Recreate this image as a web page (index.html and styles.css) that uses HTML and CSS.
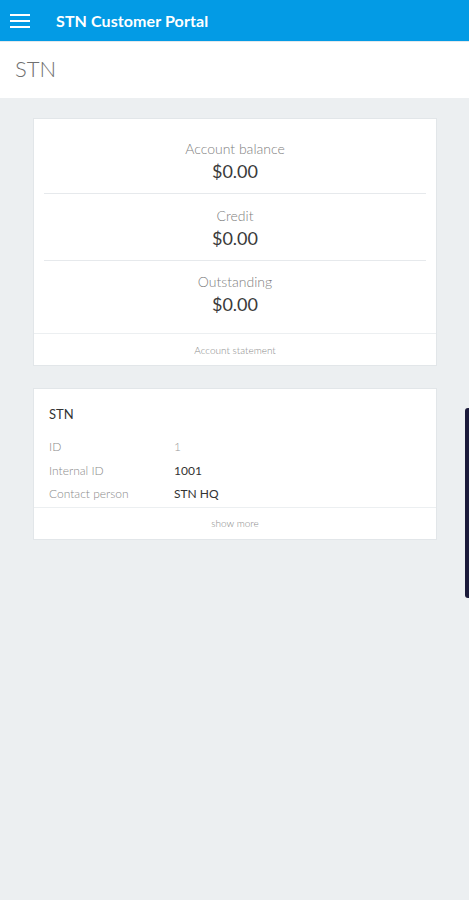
FILE: index.html
```html
<!DOCTYPE html>
<html lang="en">
<head>
    <meta charset="UTF-8">
    <meta name="viewport" content="width=device-width, initial-scale=1.0">
    <title>STN Customer Portal</title>
    <link rel="stylesheet" href="styles.css">
</head>
<body>
    <header class="topbar">
        <span class="menu" aria-label="Menu">
            <svg width="20" height="14" viewBox="0 0 20 14">
                <rect x="0" y="0" width="20" height="2" fill="#fff"/>
                <rect x="0" y="6" width="20" height="2" fill="#fff"/>
                <rect x="0" y="12" width="20" height="2" fill="#fff"/>
            </svg>
        </span>
        <h1>STN Customer Portal</h1>
    </header>
    <div class="subbar">
        <h2>STN</h2>
    </div>
    <main>
        <section class="card balance">
            <div class="stat">
                <span class="label">Account balance</span>
                <span class="value">$0.00</span>
            </div>
            <div class="stat">
                <span class="label">Credit</span>
                <span class="value">$0.00</span>
            </div>
            <div class="stat last">
                <span class="label">Outstanding</span>
                <span class="value">$0.00</span>
            </div>
            <a class="card-foot" href="#">Account statement</a>
        </section>

        <section class="card info">
            <h3>STN</h3>
            <dl>
                <dt>ID</dt><dd class="muted">1</dd>
                <dt>Internal ID</dt><dd>1001</dd>
                <dt>Contact person</dt><dd>STN HQ</dd>
            </dl>
            <a class="card-foot" href="#">show more</a>
        </section>
    </main>
    <div class="side-tab"></div>
</body>
</html>
```

FILE: styles.css
```css
* {
  padding: 0;
  margin: 0;
  box-sizing: border-box;
}
html {
  font-family: Lato, 'Open Sans', sans-serif;
  font-size: 14px;
  color: #333;
  background-color: #eceff1;
}
body {
  min-height: 100vh;
  background-color: #eceff1;
}
.topbar {
  height: 41px;
  background-color: #039be5;
  display: flex;
  align-items: center;
  color: #fff;
}
.menu {
  width: 56px;
  padding-left: 10px;
  display: flex;
  align-items: center;
}
.topbar h1 {
  font-size: 16px;
  font-weight: 700;
  letter-spacing: 0.1px;
}
.subbar {
  height: 57px;
  background-color: #fff;
  display: flex;
  align-items: center;
  padding-left: 15px;
  border-top: 1px solid #e3e8ec;
}
.subbar h2 {
  font-size: 22px;
  font-weight: 300;
  color: #707070;
  padding-bottom: 4px;
}
main {
  padding: 20px 32px 0 33px;
  display: flex;
  flex-direction: column;
  gap: 22px;
}
.card {
  background-color: #fff;
  border: 1px solid #e2e6e9;
  display: flex;
  flex-direction: column;
}
.balance {
  padding-top: 8px;
}
.stat {
  margin: 0 10px;
  padding: 12px 0 10px;
  display: flex;
  flex-direction: column;
  align-items: center;
  border-bottom: 1px solid #e6e9ec;
}
.stat.last {
  margin: 0;
  padding-top: 11px;
  padding-bottom: 17px;
  border-bottom-color: #eceff1;
}
.label {
  font-size: 14px;
  font-weight: 300;
  line-height: 20px;
  color: #808080;
}
.value {
  font-size: 18px;
  line-height: 24px;
  color: #3a3a3a;
}
.card-foot {
  height: 31px;
  display: flex;
  align-items: center;
  justify-content: center;
  font-size: 10px;
  font-weight: 300;
  color: #8a8a8a;
  text-decoration: none;
}
.info h3 {
  font-size: 13px;
  font-weight: 400;
  line-height: 18px;
  padding: 16px 15px 0;
  color: #333;
}
.info dl {
  display: grid;
  grid-template-columns: 125px 1fr;
  grid-auto-rows: 23.5px;
  align-items: center;
  padding: 12px 15px 1px;
  margin-left: 0;
  font-size: 12px;
  border-bottom: 1px solid #eceff1;
}
.info dt {
  font-weight: 300;
  color: #8a8a8a;
}
.info dd {
  color: #333;
}
.info dd.muted {
  color: #9a9a9a;
  font-weight: 300;
}
.side-tab {
  position: absolute;
  top: 408px;
  right: 0;
  width: 4px;
  height: 190px;
  background-color: #1b1a3a;
  border-radius: 3px 0 0 3px;
}
```
